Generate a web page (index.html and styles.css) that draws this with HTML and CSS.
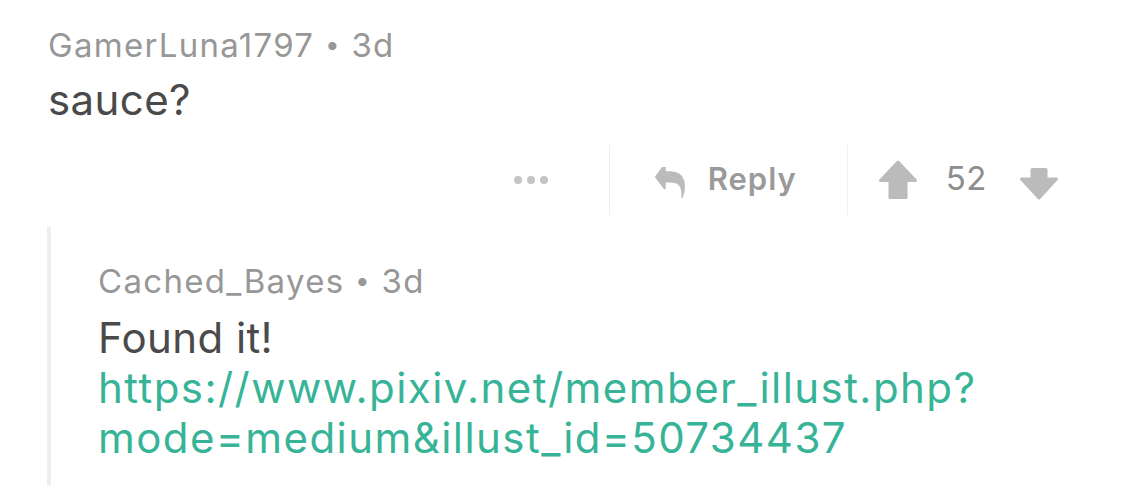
FILE: index.html
```html
<!DOCTYPE html>
<html>
<head>
<meta charset="utf-8">
<link rel="stylesheet" href="styles.css">
</head>
<body>
<div class="comment">
  <div class="meta">GamerLuna1797 <span class="dot">•</span> 3d</div>
  <div class="text">sauce?</div>
  <div class="actions">
    <div class="act-more"><span class="d"></span><span class="d"></span><span class="d"></span></div>
    <div class="sep"></div>
    <div class="act-reply">
      <svg class="reply-icon" viewBox="0 190 1792 1412" preserveAspectRatio="none" width="30" height="31"><path d="M1792 1120q0 166-127 451-3 7-10.5 24t-13.5 30-13 22q-12 17-28 17-15 0-23.5-10t-8.5-25q0-9 2.5-26.5t2.5-23.5q5-68 5-123 0-101-17.5-181t-48.5-138.5-80-101-105.5-69.5-133-42.5-154-21.5-175.5-6h-224v256q0 26-19 45t-45 19-45-19l-512-512q-19-19-19-45t19-45l512-512q19-19 45-19t45 19 19 45v256h224q713 0 875 403 53 134 53 333z" fill="#bbbbbb"/></svg>
      <span class="reply-label">Reply</span>
    </div>
    <div class="sep"></div>
    <div class="act-vote">
      <svg class="arrow up" viewBox="0 0 38 39" width="38" height="39"><path d="M19 2 L36.5 20.5 L27 20.5 L27 37.5 L11 37.5 L11 20.5 L1.5 20.5 Z" fill="#bbbbbb" stroke="#bbbbbb" stroke-width="3" stroke-linejoin="round"/></svg>
      <span class="score">52</span>
      <svg class="arrow down" viewBox="0 0 38 32" width="38" height="32"><path d="M12 1.5 L26 1.5 L26 11 L36.5 11 L19 30 L1.5 11 L12 11 Z" fill="#bbbbbb" stroke="#bbbbbb" stroke-width="3" stroke-linejoin="round"/></svg>
    </div>
  </div>
  <div class="child">
    <div class="meta">Cached_Bayes <span class="dot">•</span> 3d</div>
    <div class="text body">Found it!<br><a class="link" href="#">https://www.pixiv.net/member_illust.php?<br>mode=medium&amp;illust_id=50734437</a></div>
  </div>
</div>
</body>
</html>
```
FILE: styles.css
```css
html, body {
  margin: 0;
  padding: 0;
  background: #ffffff;
}
body {
  font-family: Inter, Roboto, "Liberation Sans", sans-serif;
  width: 1125px;
  height: 486px;
  overflow: hidden;
}
.comment {
  padding: 25px 0 0 48px;
}
.meta {
  font-size: 33px;
  line-height: 40px;
  color: #979797;
  letter-spacing: 1.3px;
}
.dot {
  font-size: 26px;
  position: relative;
  top: -3px;
}
.text {
  font-size: 42px;
  line-height: 52px;
  color: #4a4a4a;
  margin-top: 6px;
  letter-spacing: 0.4px;
}
.actions {
  display: flex;
  justify-content: flex-end;
  align-items: center;
  height: 70px;
  margin-top: 19px;
  padding-right: 67px;
}
.act-more {
  display: flex;
  gap: 5px;
  padding-right: 61px;
}
.act-more .d {
  width: 8px;
  height: 8px;
  border-radius: 50%;
  background: #c4c4c4;
}
.sep {
  width: 1px;
  height: 70px;
  background: #efefef;
}
.act-reply {
  display: flex;
  align-items: center;
  gap: 23px;
  padding: 0 50px 0 45px;
}
.reply-icon {
  margin-top: 4px;
}
.reply-label {
  font-size: 31px;
  font-weight: 600;
  color: #9a9a9a;
  letter-spacing: 1px;
  margin-top: -3px;
}
.act-vote {
  display: flex;
  align-items: center;
  padding-left: 31px;
}
.arrow.up {
  margin-top: -1px;
}
.score {
  font-size: 33px;
  color: #8e8e8e;
  letter-spacing: 0.5px;
  margin: -4px 33px 0 29px;
}
.arrow.down {
  margin-top: 7px;
}
.child {
  margin: 12px 0 0 -1px;
  border-left: 4px solid #efefef;
  padding: 34px 0 40px 47px;
}
.child .body {
  margin-top: 9px;
  line-height: 50px;
}
.link {
  color: #37b498;
  text-decoration: none;
  letter-spacing: 1.45px;
}
```
